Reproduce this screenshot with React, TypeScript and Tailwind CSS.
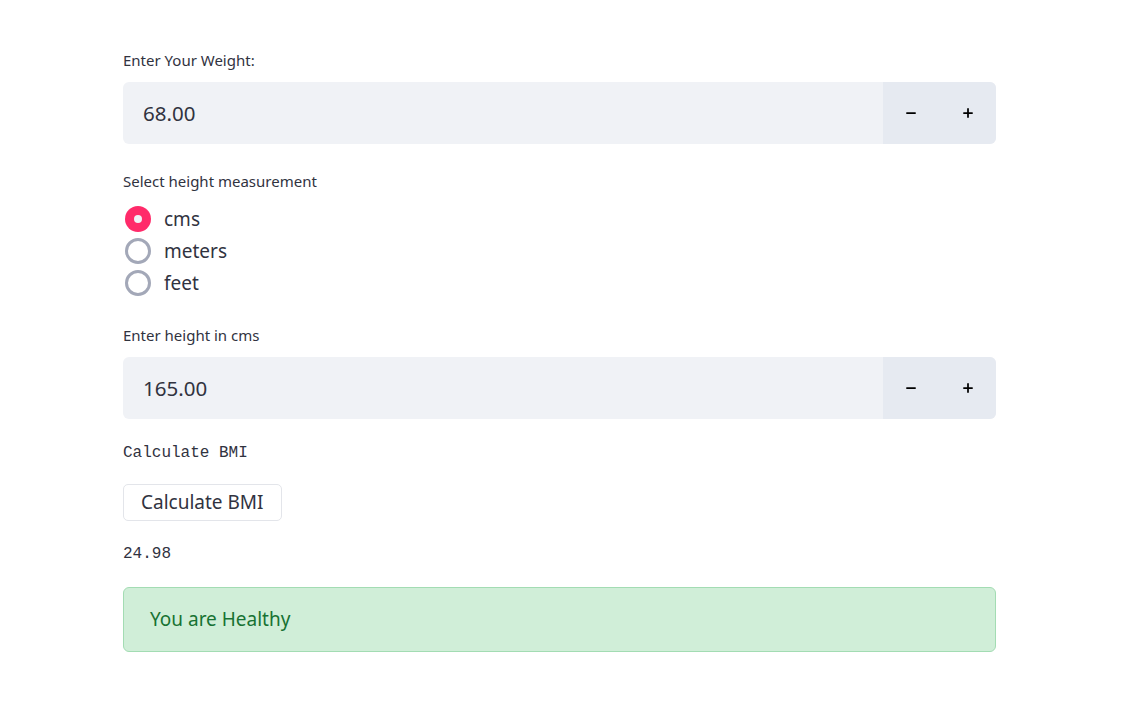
import { Minus, Plus } from "lucide-react";

const sans = { fontFamily: '"Noto Sans", "Open Sans", sans-serif' };
const mono = { fontFamily: '"Liberation Mono", "DejaVu Sans Mono", monospace' };

function NumberInput({ label, value }: { label: string; value: string }) {
    return (
        <div className="flex flex-col">
            <label className="text-[15px] text-[#31333f] mb-[12px] leading-[20px]">{label}</label>
            <div className="flex h-[62px] rounded-md overflow-hidden bg-[#f0f2f6]">
                <div className="flex-1 flex items-center px-[20px] text-[20.5px] text-[#31333f]">{value}</div>
                <div className="w-[113px] flex bg-[#e6eaf1]">
                    <button className="flex-1 flex items-center justify-center text-black">
                        <Minus size={14} strokeWidth={3} />
                    </button>
                    <button className="flex-1 flex items-center justify-center text-black">
                        <Plus size={14} strokeWidth={3} />
                    </button>
                </div>
            </div>
        </div>
    );
}

function Radio({ label, checked }: { label: string; checked?: boolean }) {
    return (
        <div className="flex items-center h-[32px] gap-[13px]">
            {checked ? (
                <span className="w-[26px] h-[26px] rounded-full bg-[#ff2b6a] flex items-center justify-center ml-[2px]">
                    <span className="w-[8px] h-[8px] rounded-full bg-[#f0f2f6]" />
                </span>
            ) : (
                <span className="w-[26px] h-[26px] rounded-full border-[3px] border-[#a3a8b8] ml-[2px]" />
            )}
            <span className="text-[19px] text-[#31333f]">{label}</span>
        </div>
    );
}

export default function App() {
    return (
        <div className="min-h-screen bg-white" style={sans}>
            <div className="w-[873px] ml-[123px] pt-[50px] flex flex-col">
                <NumberInput label="Enter Your Weight:" value="68.00" />

                <div className="mt-[27px]">
                    <div className="text-[15px] text-[#31333f] leading-[20px] mb-[12px]">Select height measurement</div>
                    <Radio label="cms" checked />
                    <Radio label="meters" />
                    <Radio label="feet" />
                </div>

                <div className="mt-[26px]">
                    <NumberInput label="Enter height in cms" value="165.00" />
                </div>

                <div className="mt-[24px] text-[16px] text-[#31333f] leading-[20px]" style={mono}>
                    Calculate BMI
                </div>

                <div className="mt-[21px]">
                    <button className="h-[37px] px-[17px] border border-[#e3e5ea] rounded-[5px] bg-white text-[19px] text-[#31333f]">
                        Calculate BMI
                    </button>
                </div>

                <div className="mt-[23px] text-[16px] text-[#31333f] leading-[20px]" style={mono}>
                    24.98
                </div>

                <div className="mt-[23px] h-[65px] rounded-md border border-[#a3dcb3] bg-[#d0eed8] flex items-center px-[26px] text-[19px] text-[#177233]">
                    You are Healthy
                </div>
            </div>
        </div>
    );
}
